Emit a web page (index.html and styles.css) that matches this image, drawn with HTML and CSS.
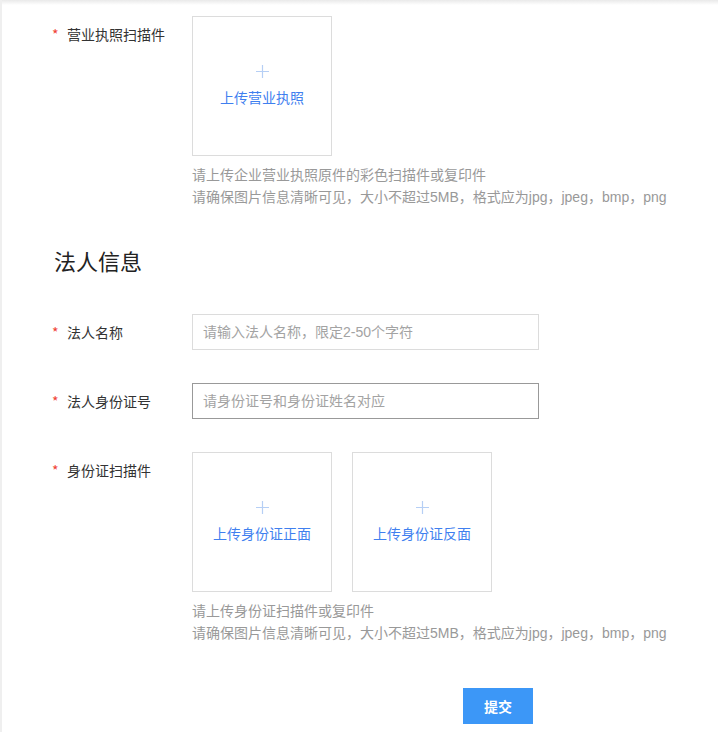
FILE: index.html
```html
<!DOCTYPE html>
<html lang="zh-CN">
<head>
    <meta charset="UTF-8">
    <meta name="viewport" content="width=device-width, initial-scale=1.0">
    <title>企业认证</title>
    <link rel="stylesheet" href="styles.css">
</head>
<body>
    <div class="page">
        <div class="form-row">
            <label class="form-label"><span class="required">*</span>营业执照扫描件</label>
            <div class="form-field">
                <div class="upload-list">
                    <div class="upload-box">
                        <svg class="upload-plus" width="13" height="13" viewBox="0 0 13 13">
                            <path d="M6.5 0V13M0 6.5H13" stroke="currentColor" stroke-width="1.2" fill="none"/>
                        </svg>
                        <span class="upload-text">上传营业执照</span>
                    </div>
                </div>
                <p class="hint">请上传企业营业执照原件的彩色扫描件或复印件<br>请确保图片信息清晰可见，大小不超过5MB，格式应为jpg，jpeg，bmp，png</p>
            </div>
        </div>

        <h2 class="section-title">法人信息</h2>

        <div class="form-row">
            <label class="form-label" for="legalName"><span class="required">*</span>法人名称</label>
            <div class="form-field">
                <input type="text" id="legalName" class="text-input" placeholder="请输入法人名称，限定2-50个字符">
            </div>
        </div>

        <div class="form-row">
            <label class="form-label" for="idNumber"><span class="required">*</span>法人身份证号</label>
            <div class="form-field">
                <input type="text" id="idNumber" class="text-input active" placeholder="请身份证号和身份证姓名对应">
            </div>
        </div>

        <div class="form-row">
            <label class="form-label"><span class="required">*</span>身份证扫描件</label>
            <div class="form-field">
                <div class="upload-list">
                    <div class="upload-box">
                        <svg class="upload-plus" width="13" height="13" viewBox="0 0 13 13">
                            <path d="M6.5 0V13M0 6.5H13" stroke="currentColor" stroke-width="1.2" fill="none"/>
                        </svg>
                        <span class="upload-text">上传身份证正面</span>
                    </div>
                    <div class="upload-box">
                        <svg class="upload-plus" width="13" height="13" viewBox="0 0 13 13">
                            <path d="M6.5 0V13M0 6.5H13" stroke="currentColor" stroke-width="1.2" fill="none"/>
                        </svg>
                        <span class="upload-text">上传身份证反面</span>
                    </div>
                </div>
                <p class="hint">请上传身份证扫描件或复印件<br>请确保图片信息清晰可见，大小不超过5MB，格式应为jpg，jpeg，bmp，png</p>
            </div>
        </div>

        <div class="form-actions">
            <button class="submit-btn">提交</button>
        </div>
    </div>
</body>
</html>
```

FILE: styles.css
```css
html, body {
    margin: 0;
    padding: 0;
    background: #fff;
}

body {
    font-family: "Liberation Sans", "Noto Sans CJK SC", sans-serif;
    font-size: 14px;
    color: #333;
}

.page {
    min-height: 732px;
    box-sizing: border-box;
    border-left: 2px solid #efefef;
    background: linear-gradient(#e9e9e9, #fff 5px);
    padding: 16px 0 0 50px;
}

.form-row {
    display: flex;
    margin-bottom: 32px;
}

.form-label {
    width: 140px;
    flex-shrink: 0;
    line-height: 36px;
    color: #333;
}

.required {
    display: inline-block;
    width: 15px;
    color: #f04134;
    font-family: "Noto Sans CJK SC", sans-serif;
}

.form-field {
    display: flex;
    flex-direction: column;
}

.upload-list {
    display: flex;
    gap: 20px;
}

.upload-box {
    width: 140px;
    height: 140px;
    box-sizing: border-box;
    border: 1px solid #dcdcdc;
    display: flex;
    flex-direction: column;
    align-items: center;
    justify-content: center;
    cursor: pointer;
}

.upload-plus {
    color: #b6cff5;
    display: block;
}

.upload-text {
    margin-top: 10px;
    line-height: 20px;
    color: #3f7fef;
}

.hint {
    margin: 8px 0 0;
    line-height: 22px;
    color: #999;
}

.section-title {
    margin: 40px 0 36px 2px;
    font-size: 22px;
    line-height: 30px;
    font-weight: normal;
    color: #222;
}

.text-input {
    width: 347px;
    height: 36px;
    box-sizing: border-box;
    border: 1px solid #dcdcdc;
    padding: 0 10px;
    font-family: inherit;
    font-size: 14px;
    color: #333;
    outline: none;
}

.text-input::placeholder {
    color: #a3a3a3;
}

.text-input.active {
    border-color: #999;
}

.form-actions {
    margin-top: 44px;
    padding-left: 411px;
}

.submit-btn {
    width: 70px;
    height: 36px;
    border: none;
    background: #3c97f7;
    color: #fff;
    font-family: inherit;
    font-size: 14px;
    font-weight: bold;
    cursor: pointer;
}
```
